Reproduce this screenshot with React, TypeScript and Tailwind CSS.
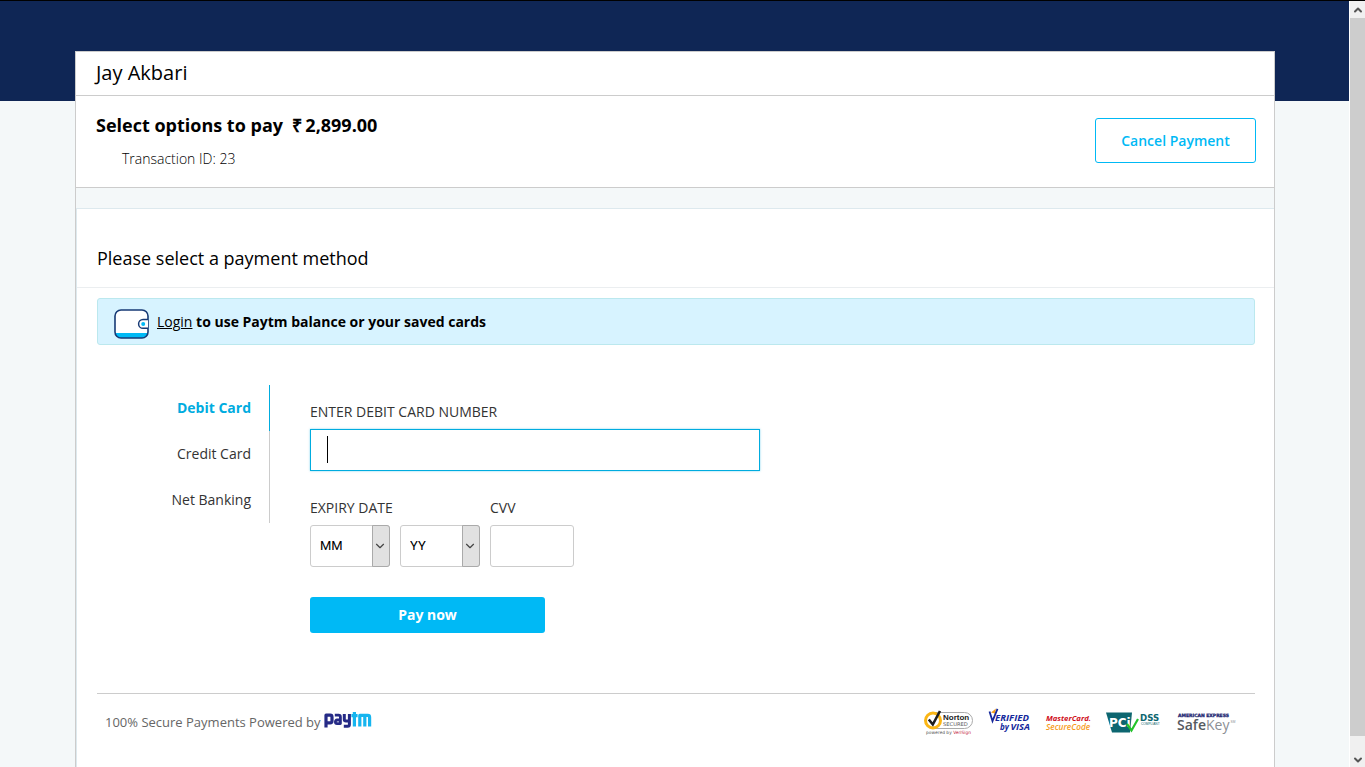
import { useState } from "react";
import { ChevronDown, ChevronUp } from "lucide-react";

const METHODS = ["Debit Card", "Credit Card", "Net Banking"];
const MONTHS = ["01", "02", "03", "04", "05", "06", "07", "08", "09", "10", "11", "12"];
const YEARS = ["18", "19", "20", "21", "22", "23", "24", "25"];

function WalletIcon() {
  return (
    <svg width="35" height="30" viewBox="0 0 35 30" aria-hidden="true">
      <defs>
        <clipPath id="wallet-body">
          <rect x="1" y="1" width="33" height="28" rx="6" />
        </clipPath>
      </defs>
      <g clipPath="url(#wallet-body)">
        <rect width="35" height="30" fill="#fff" />
        <rect y="24" width="35" height="6" fill="#00b9f5" />
      </g>
      <rect x="1" y="1" width="33" height="28" rx="6" fill="none" stroke="#173a75" strokeWidth="1.6" />
      <path d="M34 10.5h-5a4.4 4.4 0 0 0 0 8.8H34" fill="#fff" stroke="#173a75" strokeWidth="1.5" />
      <circle cx="29.2" cy="15" r="2" fill="#00b9f5" />
    </svg>
  );
}

function PaytmLogo() {
  return (
    <svg width="48" height="18" viewBox="0 0 48 18" role="img" aria-label="paytm">
      <g fill="none" strokeWidth="3.2" strokeLinejoin="round">
        <g stroke="#252a86">
          <path d="M2 16.5V4.2h4.2q1.8 0 1.8 1.8v4q0 1.8-1.8 1.8H3" />
          <path d="M10.8 4.2h3.8q1.8 0 1.8 1.8v6.6h-3.4q-1.6 0-1.6-1.6 0-2 1.6-2h3.4" strokeWidth="2.8" />
          <path d="M20.3 3v5.2q0 1.8 1.6 1.8h2.5M25.4 3v10.4q0 1.8-1.8 1.8h-3.8" strokeWidth="3" />
        </g>
        <g stroke="#16b5ef">
          <path d="M30.4 1v14.5M27.4 4.6h6.2" />
          <path d="M35.8 15.5V4.4h8q1.8 0 1.8 1.8v9.3M40.8 4v11.5" />
        </g>
      </g>
    </svg>
  );
}

function NortonLogo() {
  return (
    <svg width="52" height="28" viewBox="0 0 52 28" role="img" aria-label="Norton Secured">
      <rect x="4" y="4.5" width="45.5" height="16" rx="8" fill="#fff" stroke="#aaa" />
      <circle cx="10" cy="12.5" r="7.5" fill="#fff" stroke="#fbb615" strokeWidth="3" />
      <path d="M5.8 11.5 9.8 16.5 17 3" fill="none" stroke="#1d1d1d" strokeWidth="2.6" />
      <text x="20" y="12" fontFamily="Liberation Sans" fontWeight="700" fontSize="8" fill="#222">Norton</text>
      <text x="20" y="18.2" fontFamily="DejaVu Sans" fontSize="5.2" fill="#555">SECURED</text>
      <text x="3" y="25.8" fontFamily="DejaVu Sans" fontSize="4.4" fill="#555">
        powered by <tspan fill="#c1203a">VeriSign</tspan>
      </text>
    </svg>
  );
}

function VisaLogo() {
  return (
    <svg width="44" height="28" viewBox="0 0 44 28" role="img" aria-label="Verified by Visa">
      <path d="m3 4.5 5-4-1 5z" fill="#f5a01c" />
      <path d="m1.5 3.5 3 9.5L9.5.8" fill="none" stroke="#14289b" strokeWidth="1.8" />
      <g fontFamily="Open Sans" fontWeight="700" fontStyle="italic" fill="#14289b">
        <text x="7" y="13" fontSize="9.6">ERIFIED</text>
        <text x="12" y="22" fontSize="8">by</text>
        <text x="22.5" y="22" fontSize="9.4">VISA</text>
      </g>
    </svg>
  );
}

function MasterCardLogo() {
  return (
    <svg width="48" height="28" viewBox="0 0 48 28" role="img" aria-label="MasterCard SecureCode">
      <g fontFamily="Open Sans" fontStyle="italic">
        <text x="1" y="12.5" fontSize="7.7" fontWeight="700" fill="#d0101c">MasterCard.</text>
        <text x="1" y="21.5" fontSize="8.3" fontWeight="600" fill="#f79b1b">SecureCode</text>
      </g>
    </svg>
  );
}

function PciLogo() {
  return (
    <svg width="58" height="28" viewBox="0 0 58 28" role="img" aria-label="PCI DSS Compliant">
      <path d="M0 4.5h26l-2 20H6z" fill="#0d6670" />
      <text x="3" y="19" fontFamily="DejaVu Sans" fontWeight="700" fontSize="12" fill="#fff">PCi</text>
      <path d="m21 16 4.5 6.5L32 11" fill="none" stroke="#23c32a" strokeWidth="2.2" />
      <text x="34" y="12.5" fontFamily="DejaVu Sans" fontWeight="700" fontSize="8.6" fill="#0d6670">DSS</text>
      <text x="35" y="17" fontFamily="Liberation Sans" fontSize="3.2" fill="#0d6670">COMPLIANT</text>
    </svg>
  );
}

function SafeKeyLogo() {
  return (
    <svg width="60" height="28" viewBox="0 0 60 28" role="img" aria-label="American Express SafeKey">
      <text x="1" y="8.5" fontFamily="DejaVu Sans" fontWeight="700" fontSize="4.5" fill="#1c2570" stroke="#1c2570" strokeWidth=".3">
        AMERICAN EXPRESS
      </text>
      <text x="0" y="21.5" fontFamily="Open Sans" fontSize="14" fontWeight="600" fill="#555a60">
        Safe<tspan fontWeight="400" fill="#8b8f94">Key</tspan>
      </text>
      <text x="53.5" y="15" fontFamily="Liberation Sans" fontSize="3.2" fill="#8b8f94">SM</text>
    </svg>
  );
}

function ExpirySelect({ label, hint, options }: { label: string; hint: string; options: string[] }) {
  return (
    <div className="relative w-20">
      <select
        aria-label={label}
        className="h-[42px] w-full appearance-none rounded-[3px] border border-[#ccc] bg-white pl-[9px] font-[Roboto,sans-serif] text-[13px] text-black"
      >
        <option>{hint}</option>
        {options.map((o) => (
          <option key={o}>{o}</option>
        ))}
      </select>
      <span className="pointer-events-none absolute inset-y-0 right-0 flex w-[18px] items-center rounded-r-[3px] border border-[#aaa] bg-[#e1e1e1]">
        <ChevronDown size={14} strokeWidth={2} className="text-[#444]" />
      </span>
    </div>
  );
}

function ScrollRail() {
  return (
    <div className="flex w-4 shrink-0 flex-col border-l border-white bg-[#f0f0f0]" aria-hidden="true">
      <span className="flex h-[17px] items-center justify-center text-[#555]">
        <ChevronUp size={12} strokeWidth={4} />
      </span>
      <span className="grow bg-[#cdcdcd]" />
      <span className="flex h-[31px] items-end justify-center pb-px text-[#555]">
        <ChevronDown size={12} strokeWidth={4} />
      </span>
    </div>
  );
}

export default function App() {
  const [method, setMethod] = useState(METHODS[0]);

  return (
    <div className="flex min-h-screen border-t border-black bg-[#f4f8f9] font-['Open_Sans',sans-serif] text-sm text-black">
      <div className="flex grow flex-col">
        <div className="h-[100px] bg-[#0f2655]" />
        <main className="mr-[74px] -mt-[50px] ml-[75px] flex grow flex-col border border-b-0 border-[#ccc]">
          <header className="border-b border-[#ccc] bg-white px-5">
            <h1 className="pb-px text-xl leading-[42px]">Jay Akbari</h1>
          </header>

          <section className="flex items-start justify-between border-b border-[#ccc] bg-white pt-[13px] pr-[18px] pb-[15px] pl-5">
            <div>
              <h2 className="text-lg leading-8 font-bold">
                Select options to pay &nbsp;₹<span className="pl-[3px]">2,899.00</span>
              </h2>
              <p className="pt-[5px] pl-[26px] leading-[26px] font-light">Transaction ID: 23</p>
            </div>
            <button
              type="button"
              className="mt-[9px] h-[45px] w-[161px] rounded-[3px] border border-[#00b9f5] bg-white font-semibold text-[#00b9f5]"
            >
              Cancel Payment
            </button>
          </section>

          <section className="mt-5 grow border-t border-l border-[#dde9ee] bg-white">
            <h2 className="border-b border-[#ebeef0] px-5 pt-[34px] pb-[14px] text-lg leading-[30px]">
              Please select a payment method
            </h2>

            <div className="mt-[10px] mr-[19px] ml-5 flex h-[47px] items-center gap-2 rounded-[3px] border border-[#bbe8ee] bg-[#d7f3ff] pt-1 pl-4 font-bold">
              <WalletIcon />
              <p className="pb-1">
                <a href="#login" className="font-normal underline">
                  Login
                </a>{" "}
                to use Paytm balance or your saved cards
              </p>
            </div>

            <div className="mt-10 flex gap-10">
              <nav className="flex w-[193px] flex-col self-start" aria-label="Payment methods">
                {METHODS.map((m) => (
                  <button
                    key={m}
                    type="button"
                    onClick={() => setMethod(m)}
                    className={
                      m === method
                        ? "h-[46px] border-r border-[#00acdf] pr-[18px] text-right font-bold text-[#00acdf]"
                        : "h-[46px] border-r border-[#ccc] pr-[18px] text-right text-[#333]"
                    }
                  >
                    {m}
                  </button>
                ))}
              </nav>

              <form className="w-[450px] pt-4 text-[#333]" onSubmit={(e) => e.preventDefault()}>
                <label htmlFor="card-number" className="block h-7 leading-[22px]">
                  ENTER DEBIT CARD NUMBER
                </label>
                <div className="relative">
                  <input
                    id="card-number"
                    type="text"
                    inputMode="numeric"
                    className="block h-[42px] w-full border border-[#00acdf] bg-white px-4 shadow-[0_0_2px_#00acdf80] outline-none"
                  />
                  <span className="pointer-events-none absolute top-[7px] left-[17px] h-[27px] w-px bg-black" />
                </div>

                <div className="mt-[26px] flex gap-[10px]">
                  <fieldset>
                    <legend className="h-7 leading-[22px]">EXPIRY DATE</legend>
                    <div className="flex gap-[10px]">
                      <ExpirySelect label="Expiry month" hint="MM" options={MONTHS} />
                      <ExpirySelect label="Expiry year" hint="YY" options={YEARS} />
                    </div>
                  </fieldset>
                  <div>
                    <label htmlFor="cvv" className="block h-7 leading-[22px]">
                      CVV
                    </label>
                    <input
                      id="cvv"
                      type="password"
                      className="block h-[42px] w-[84px] rounded-[3px] border border-[#ccc] bg-white px-3"
                    />
                  </div>
                </div>

                <button
                  type="submit"
                  className="mt-[30px] block h-9 w-[235px] rounded-[3px] bg-[#00b9f5] font-['Noto_Sans',sans-serif] font-bold text-white"
                >
                  Pay now
                </button>
              </form>
            </div>

            <footer className="mt-[60px] mr-[19px] ml-5 flex items-center justify-between border-t border-[#ccc] pt-[14px] pr-[18px] pl-2">
              <p className="flex items-center gap-[3px] text-[13px] text-[#666]">
                100% Secure Payments Powered by
                <span className="pb-1">
                  <PaytmLogo />
                </span>
              </p>
              <div className="flex gap-[13px]">
                <NortonLogo />
                <VisaLogo />
                <MasterCardLogo />
                <PciLogo />
                <SafeKeyLogo />
              </div>
            </footer>
          </section>
        </main>
      </div>
      <ScrollRail />
    </div>
  );
}
